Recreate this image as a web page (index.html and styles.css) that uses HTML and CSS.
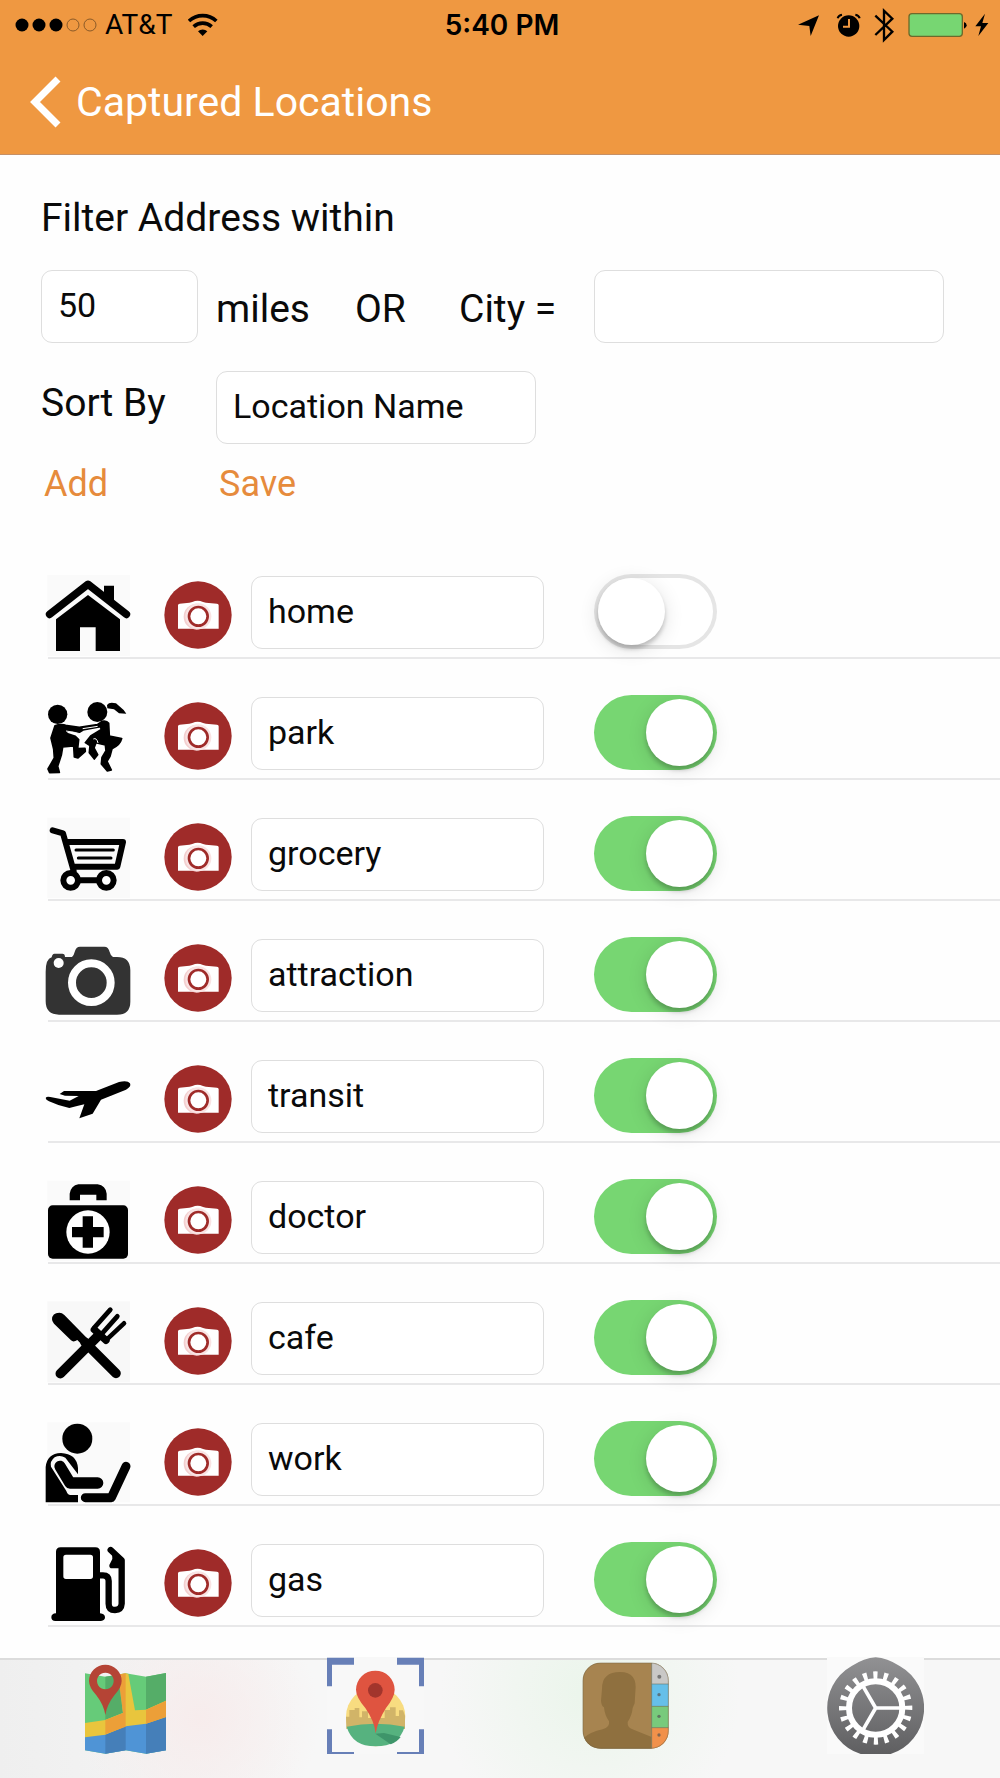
FILE: index.html
```html
<!DOCTYPE html>
<html lang="en">
<head>
<meta charset="utf-8">
<meta name="viewport" content="width=device-width, initial-scale=1">
<title>Captured Locations</title>
<link rel="stylesheet" href="styles.css">
</head>
<body>
<svg class="defs" aria-hidden="true">
  <symbol id="camera" viewBox="0 0 204 204">
    <circle cx="102" cy="102" r="101" fill="#9f2b29"/>
    <path d="M42 73q0-5 5-5l29-3q7-1 11-3 5-3 14-3t14 3q4 2 11 3l33 3q5 1 5 5v70H42z" fill="#fff"/>
    <circle cx="98" cy="107" r="39" fill="#f3cfcf"/>
    <circle cx="103" cy="106" r="39" fill="#f9e3e3"/>
    <circle cx="103" cy="106" r="28" fill="#fff" stroke="#9f2b29" stroke-width="8"/>
  </symbol>
</svg>

<header class="header">
  <div class="status">
    <div class="status-left">
      <svg width="82" height="16" viewBox="0 0 82 16" aria-hidden="true">
        <circle cx="7" cy="8" r="6.5"/><circle cx="24" cy="8" r="6.5"/><circle cx="41" cy="8" r="6.5"/>
        <g fill="none" stroke="#8a5a28"><circle cx="58" cy="8" r="6"/><circle cx="75" cy="8" r="6"/></g>
      </svg>
      <span class="carrier">AT&amp;T</span>
      <svg class="wifi" width="30" height="24" viewBox="566 34 90 72" aria-hidden="true">
        <g fill="none" stroke="#000" stroke-width="11"><path d="M569 58a60 60 0 0 1 82 0"/><path d="M583 75a40 40 0 0 1 54 0"/></g>
        <path d="M596 89a20 20 0 0 1 28 0l-14 14z"/>
      </svg>
    </div>
    <time class="clock">5:40 PM</time>
    <svg class="status-right" width="193" height="36" viewBox="888 18 579 108" aria-hidden="true">
      <path d="M957 43 932 105 928 75 894 71z"/>
      <circle cx="1046" cy="75" r="32"/>
      <path d="M1013 52q2-9 13-11M1079 52q-2-9-13-11" fill="none" stroke="#000" stroke-width="6"/>
      <path d="M1047 54v23h-18" fill="none" stroke="#ef9841" stroke-width="6"/>
      <path d="m1126 44 51 48-25 25V29l25 24-51 49" fill="none" stroke="#000" stroke-width="7"/>
      <rect x="1227" y="38" width="160" height="68" rx="9" fill="#77d672" stroke="#6d6a2b" stroke-width="4"/>
      <path d="M1392 63q8 2 8 10t-8 10z"/>
      <path d="m1455 38-29 38h17l-8 29 30-39h-18z"/>
    </svg>
  </div>
  <nav class="nav">
    <a class="back" href="#">
      <svg width="31" height="52" viewBox="0 0 31 52" aria-hidden="true"><path d="M28 3 5 26l23 23" fill="none" stroke="#fff" stroke-width="7"/></svg>
      <span>Captured Locations</span>
    </a>
  </nav>
</header>

<main class="main">
  <form class="filter">
    <label class="filter-title" for="miles">Filter Address within</label>
    <div class="filter-row">
      <input class="field" id="miles" type="text" value="50">
      <span class="word">miles</span>
      <span class="word">OR</span>
      <label class="word" for="city">City =</label>
      <input class="field" id="city" type="text">
    </div>
    <div class="sort-row">
      <label class="sort-label" for="sort">Sort By</label>
      <select class="field" id="sort"><option>Location Name</option></select>
    </div>
    <div class="actions">
      <button class="action" type="button">Add</button>
      <button class="action" type="button">Save</button>
    </div>
  </form>

  <ul class="list">
    <li class="row">
      <svg class="icon" viewBox="54 45 252 249" aria-hidden="true">
        <path fill="#fafafa" d="M52 48h248v243H52z"/>
        <path d="M78 276v-95l96-73 96 73v95h-73v-71h-47v71z"/>
        <path d="M222 104V80h30v50z"/>
        <path d="m59 166 115-90 115 90" fill="none" stroke="#000" stroke-width="23" stroke-linecap="round" stroke-linejoin="round"/>
      </svg>
      <button class="photo" type="button" aria-label="Photo"><svg viewBox="0 0 204 204"><use href="#camera"/></svg></button>
      <input class="field name" type="text" value="home" aria-label="Name">
      <input class="switch" type="checkbox" aria-label="Enabled">
    </li>
    <li class="row">
      <svg class="icon" viewBox="54 407 252 249" aria-hidden="true">
        <circle cx="83" cy="465" r="29"/><circle cx="202" cy="458" r="30"/>
        <path d="M231 437q7-11 27-5l23 20 8 11-22-1-15-12-20-3z"/>
        <path d="M75 499q18-7 36 0l37 5 54-8 14-10q14-3 20 6l2 38 37 8q-5 20-29 30l-6 23-9 15 13 26-12 3-18-21 2-20 12-20-2-17-28-7-6 16 11 20-10 13-15-19 2-21-14-9 16-20 32-20-3-8-52 10-12 8-18-5-21-1 3 9 25 8 10 10-3 27 22-1 1 9-22 20-11-3-2-33-33 3-4 24-11 34 5 18-29 1-5-11 19-33-2-27-8-33z" stroke="#000" stroke-width="5" stroke-linejoin="round"/>
        <path d="M108 515q30 4 49 10M158 508l45-7M190 539q10-5 14 12" fill="none" stroke="#fff" stroke-width="3"/>
      </svg>
      <button class="photo" type="button" aria-label="Photo"><svg viewBox="0 0 204 204"><use href="#camera"/></svg></button>
      <input class="field name" type="text" value="park" aria-label="Name">
      <input class="switch" type="checkbox" aria-label="Enabled" checked>
    </li>
    <li class="row">
      <svg class="icon" viewBox="54 47 252 249" aria-hidden="true">
        <path fill="#fafafa" d="M52 52h248v241H52z"/>
        <g fill="none" stroke="#000" stroke-linecap="round" stroke-linejoin="round">
          <path d="m68 90 31 9 32 113M107 125h172l-17 74H130M121 240h108" stroke-width="18"/>
          <path d="M138 149h112M145 173h98" stroke-width="9"/>
        </g>
        <g fill="#fff" stroke="#000" stroke-width="18"><circle cx="122" cy="240" r="22"/><circle cx="229" cy="240" r="22"/></g>
      </svg>
      <button class="photo" type="button" aria-label="Photo"><svg viewBox="0 0 204 204"><use href="#camera"/></svg></button>
      <input class="field name" type="text" value="grocery" aria-label="Name">
      <input class="switch" type="checkbox" aria-label="Enabled" checked>
    </li>
    <li class="row">
      <svg class="icon" viewBox="54 411 252 249" aria-hidden="true">
        <path fill="#333" d="M47 515q0-38 18-43 2-11 8-11h24q8 0 8 10h21q5-3 8-15 4-16 16-16h73q12 0 16 16 3 12 10 15h12q40 0 40 40v94q0 39-40 39H87q-40 0-40-40z"/>
        <circle cx="86" cy="489" r="15" fill="#fff"/>
        <circle cx="184" cy="548" r="58" fill="none" stroke="#fff" stroke-width="24"/>
      </svg>
      <button class="photo" type="button" aria-label="Photo"><svg viewBox="0 0 204 204"><use href="#camera"/></svg></button>
      <input class="field name" type="text" value="attraction" aria-label="Name">
      <input class="switch" type="checkbox" aria-label="Enabled" checked>
    </li>
    <li class="row">
      <svg class="icon" viewBox="54 25 252 249" aria-hidden="true">
        <path d="M47 145q3-6 14-3l58 11 27-14-41-1-16-5 13-9h96l69-27q26-6 33 4 5 10-12 19l-75 30-25 42-40 14 15-42q-27 6-45 11-32-6-61-20-10-4-10-10z"/>
      </svg>
      <button class="photo" type="button" aria-label="Photo"><svg viewBox="0 0 204 204"><use href="#camera"/></svg></button>
      <input class="field name" type="text" value="transit" aria-label="Name">
      <input class="switch" type="checkbox" aria-label="Enabled" checked>
    </li>
    <li class="row">
      <svg class="icon" viewBox="54 386 252 249" aria-hidden="true">
        <path fill="#fafafa" d="M52 391h248v240H52z"/>
        <rect x="54" y="465" width="240" height="160" rx="14"/>
        <path d="M119 450v-20q4-24 26-28h58q24 4 27 28v20h-31v-17h-49v17z"/>
        <circle cx="174" cy="545" r="65" fill="#fff"/>
        <path d="M158 498h31v32h32v31h-32v31h-31v-31h-32v-31h32z"/>
      </svg>
      <button class="photo" type="button" aria-label="Photo"><svg viewBox="0 0 204 204"><use href="#camera"/></svg></button>
      <input class="field name" type="text" value="doctor" aria-label="Name">
      <input class="switch" type="checkbox" aria-label="Enabled" checked>
    </li>
    <li class="row">
      <svg class="icon" viewBox="54 29 252 249" aria-hidden="true">
        <path fill="#f8f8f8" d="M52 33h248v243H52z"/>
        <g fill="none" stroke="#000" stroke-linecap="round">
          <path d="M91 250 205 136M165 156l93 93" stroke-width="29"/>
          <path d="m241 58-48 54M262 78l-48 54M282 99l-52 49" stroke-width="14"/>
          <path d="m193 118 35 32" stroke-width="22"/>
        </g>
        <path d="M66 87q0-19 22-20 8 0 15 7l86 88-16 19-31-32q-12 8-19 1l-51-50q-6-6-6-13z"/>
      </svg>
      <button class="photo" type="button" aria-label="Photo"><svg viewBox="0 0 204 204"><use href="#camera"/></svg></button>
      <input class="field name" type="text" value="cafe" aria-label="Name">
      <input class="switch" type="checkbox" aria-label="Enabled" checked>
    </li>
    <li class="row">
      <svg class="icon" viewBox="54 392 252 249" aria-hidden="true">
        <path fill="#fafafa" d="M52 396h248v240H52z"/>
        <circle cx="142" cy="445" r="45"/>
        <path d="M47 636V530q4-40 46-42 47 2 51 45v19l-38-50q-16-9-32-1-15 12-11 28l46 73q4 12 12 12h23v22z"/>
        <path d="m90 528 30 50h83" fill="none" stroke="#000" stroke-width="34" stroke-linecap="round" stroke-linejoin="round"/>
        <path d="M166 622h78l44-94" fill="none" stroke="#000" stroke-width="27" stroke-linecap="round" stroke-linejoin="round"/>
      </svg>
      <button class="photo" type="button" aria-label="Photo"><svg viewBox="0 0 204 204"><use href="#camera"/></svg></button>
      <input class="field name" type="text" value="work" aria-label="Name">
      <input class="switch" type="checkbox" aria-label="Enabled" checked>
    </li>
    <li class="row">
      <svg class="icon" viewBox="54 754 252 249" aria-hidden="true">
        <path fill-rule="evenodd" d="M78 968V784q0-14 14-14h104q14 0 14 14v184q15 2 15 12t-12 11H76q-12 0-12-11t14-12zM108 792q-8 0-8 8v57q0 8 8 8h73q8 0 8-8v-57q0-8-8-8z"/>
        <path d="M210 854h9q17 0 17 17v68q0 19 19 19t20-19V809l-33-31" fill="none" stroke="#000" stroke-width="19" stroke-linecap="round" stroke-linejoin="round"/>
        <path d="m246 782 1 23-9 18q-1 10 8 10h32v-30z"/>
      </svg>
      <button class="photo" type="button" aria-label="Photo"><svg viewBox="0 0 204 204"><use href="#camera"/></svg></button>
      <input class="field name" type="text" value="gas" aria-label="Name">
      <input class="switch" type="checkbox" aria-label="Enabled" checked>
    </li>
  </ul>
</main>

<nav class="tabs">
  <a class="tab" href="#" aria-label="Map">
    <svg viewBox="51 51 291 291" aria-hidden="true">
      <path fill="#66cb79" d="m75 100 61 10 61-10 61 10 60-11v232l-60 10-61-10-61 10-61-10z"/>
      <path fill="#4f94d6" d="m75 290 61-11 61-23 61-8 60-20v103l-60 10-61-10-61 10-61-10z"/>
      <path fill="#55ad68" d="m258 110 60-11v83l-60 27zM136 110l37-6 16 114-53 21z"/>
      <path fill="#457fb9" d="m258 250 60-20v101l-60 10zM136 283l61-24v72l-61 10z"/>
      <path fill="#e9c53d" d="m75 249 61-9 53-21-10-116 18-3 8 2 20 109 33-2 60-27v49l-60 20-61 8-61 25-61 8z"/>
      <path fill="#ec9f38" d="m258 209 60-27v49l-60 20zM136 240l53-21-15-115 23-4v160l-61 23z"/>
      <path fill="#b54435" fill-rule="evenodd" d="M136 225q-5-31-27-59-22-24-22-43a49 49 0 0 1 98 0q0 19-22 43-22 28-27 59zM136 98a25 25 0 1 0 .1 0z"/>
    </svg>
  </a>
  <a class="tab" href="#" aria-label="Capture">
    <svg viewBox="800 51 291 291" aria-hidden="true">
      <path fill="#f8f8f8" d="M800 51h291v291H800z"/>
      <path fill="#677fb7" d="M800 53h81v21h-66v65h-15zM1010 53h81v86h-15V74h-66zM800 268h15v68h66v6h-81zM1076 268h15v74h-81v-6h66z"/>
      <circle cx="946" cy="230" r="89" fill="#f8dc80"/>
      <path fill="#d1b468" d="M857 230h10v-20h16v-6h14v28h8v-18h18v20h50v-24h16v-8h17v26h10v-17h12l6 16v40H858z"/>
      <path fill="#56b27f" d="M859 260q87-17 174 0-17 59-87 59t-87-59z"/>
      <path fill="#3e956a" d="m945 281 26-2 50 12q-12 16-30 22z"/>
      <path fill="#df5440" d="M946 280q-4-37-31-76-28-33-28-55a58 57 0 0 1 116 0q0 22-26 55-25 39-31 76z"/>
      <circle cx="945" cy="151" r="22" fill="#a2352c"/>
    </svg>
  </a>
  <a class="tab" href="#" aria-label="Contacts">
    <svg viewBox="51 51 291 291" aria-hidden="true">
      <defs><clipPath id="book"><rect x="68" y="68" width="258" height="258" rx="54"/></clipPath></defs>
      <g clip-path="url(#book)">
        <path fill="#a78450" d="M68 68h258v258H68z"/>
        <path fill="#8f703f" d="M68 296q22-20 60-28 22-5 19-24-13-18-15-42-8-4-9-20l3-36q0-50 54-50t46 60l-2 34-6 14q-2 22-15 42-2 18 18 23l54 22v35H68z"/>
        <path fill="#c9c8c6" d="M275 68h51v64h-51z"/><path fill="#66bfe9" d="M275 132h51v67h-51z"/>
        <path fill="#78ca7c" d="M275 199h51v64h-51z"/><path fill="#f1914b" d="M275 263h51v63h-51z"/>
        <path d="M275 68v258M275 132h51M275 199h51M275 263h51" stroke="#6d7464" stroke-width="3" fill="none" opacity=".6"/>
        <g fill="#555" opacity=".7"><circle cx="298" cy="110" r="6"/><circle cx="297" cy="164" r="5"/><circle cx="297" cy="229" r="5"/><circle cx="297" cy="285" r="5"/></g>
      </g>
      <rect x="69" y="69" width="256" height="256" rx="53" fill="none" stroke="#716345" stroke-width="2" opacity=".7"/>
    </svg>
  </a>
  <a class="tab" href="#" aria-label="Settings">
    <svg viewBox="800 51 291 291" aria-hidden="true">
      <defs><linearGradient id="metal" x2="0" y2="1"><stop stop-color="#919193"/><stop offset="1" stop-color="#5f5f61"/></linearGradient></defs>
      <path fill="#fafafa" d="M800 51h291v291H800z"/>
      <path fill="url(#metal)" d="M946 52q34 2 72 26a145 145 0 0 1-27 264H901a145 145 0 0 1-27-264q38-24 72-26z"/>
      <g fill="none" stroke="#fff">
        <circle cx="946" cy="204" r="97" stroke-width="26" pathLength="200" stroke-dasharray="4 6" class="teeth"/>
        <circle cx="946" cy="204" r="80" stroke-width="18"/>
        <path d="M946 204h78M946 204l-39-67M946 204l-39 67" stroke-width="11"/>
      </g>
    </svg>
  </a>
</nav>
</body>
</html>
```
FILE: styles.css
```css
* {
  box-sizing: border-box;
}

body {
  margin: 0;
  min-height: 100vh;
  display: flex;
  flex-direction: column;
  background: #fefefe;
  color: #0a0a0a;
  font-family: Roboto, "Liberation Sans", sans-serif;
  font-size: 39px;
  line-height: 48px;
}

input,
select,
button {
  font: inherit;
  color: inherit;
  margin: 0;
}

svg {
  display: block;
}

.defs {
  width: 0;
  height: 0;
  position: absolute;
}

.header {
  background: #ef9841;
  border-bottom: 1px solid #c59067;
}

.status {
  display: grid;
  grid-template-columns: 1fr auto 1fr;
  align-items: center;
  height: 50px;
  padding: 0 11px 0 15px;
  color: #000;
}

.status-left {
  display: flex;
  align-items: center;
}

.carrier {
  margin-left: 8px;
  font-size: 28px;
}

.wifi {
  margin-left: 16px;
}

.clock {
  font-family: Inter, "Liberation Sans", sans-serif;
  font-size: 28px;
  font-weight: 600;
}

.status-right {
  justify-self: end;
}

.nav {
  display: flex;
  align-items: center;
  height: 104px;
  padding-left: 30px;
}

.back {
  display: flex;
  align-items: center;
  gap: 15px;
  color: #fff;
  font-size: 41px;
  text-decoration: none;
}

.main {
  flex: 1;
}

.filter {
  padding: 39px 41px 0;
}

.filter-title {
  display: block;
}

.filter-row,
.sort-row,
.actions {
  display: grid;
  column-gap: 18px;
  align-items: center;
}

.filter-row {
  grid-template-columns: 157px 121px 86px 117px minmax(0, 350px);
  margin-top: 28px;
}

.sort-row {
  grid-template-columns: 157px minmax(0, 320px);
  margin-top: 28px;
}

.actions {
  grid-template-columns: 157px auto;
  justify-content: start;
  margin-top: 16px;
  padding-left: 3px;
}

.word {
  padding-top: 4px;
}

.sort-label {
  padding-bottom: 10px;
}

.field {
  width: 100%;
  height: 73px;
  padding: 0 16px 4px;
  border: 1px solid #dedede;
  border-radius: 11px;
  background: #fff;
  font-size: 34px;
  appearance: none;
  outline: 0;
}

.action {
  padding: 0;
  border: 0;
  background: none;
  color: #e68b3c;
  font-size: 36px;
  text-align: left;
}

.list {
  margin: 30px 0 0;
  padding: 0 0 0 48px;
  list-style: none;
}

.row {
  display: grid;
  grid-template-columns: 84px 68px minmax(0, 293px) 123px;
  align-items: end;
  height: 121px;
  border-bottom: 2px solid #e8e8e9;
}

.icon {
  width: 84px;
  height: 83px;
  overflow: visible;
}

.photo {
  width: 68px;
  height: 68px;
  margin: 0 0 8px 32px;
  padding: 0;
  border: 0;
  background: none;
}

.name {
  margin: 0 0 8px 51px;
}

.switch {
  width: 123px;
  height: 75px;
  margin: 0 0 8px 101px;
  padding: 4px;
  border-radius: 38px;
  background: #fff;
  box-shadow: inset 0 0 0 4px #e5e5e5;
  appearance: none;
}

.switch::before {
  content: "";
  display: block;
  width: 67px;
  height: 67px;
  border-radius: 50%;
  background: #fff;
  box-shadow: 0 4px 4px rgba(0, 0, 0, 0.2), 0 4px 20px rgba(0, 0, 0, 0.12);
}

.switch:checked {
  background: #77d672;
  box-shadow: none;
}

.switch:checked::before {
  margin-left: auto;
}

.tabs {
  display: grid;
  grid-template-columns: repeat(4, 1fr);
  justify-items: center;
  height: 121px;
  background:
    linear-gradient(#fefefe 0 1px, #dcdcdc 1px 3px, transparent 3px),
    radial-gradient(circle at 20% 50%, #f7ecec, transparent 120px),
    radial-gradient(circle at 59% 30%, #ebf5eb, transparent 150px),
    linear-gradient(90deg, #efefef, #f7f7f7 30%);
}

.tab svg {
  width: 97px;
  height: 97px;
}

.teeth {
  transform-origin: 946px 204px;
  transform: rotate(-4deg);
}
```
